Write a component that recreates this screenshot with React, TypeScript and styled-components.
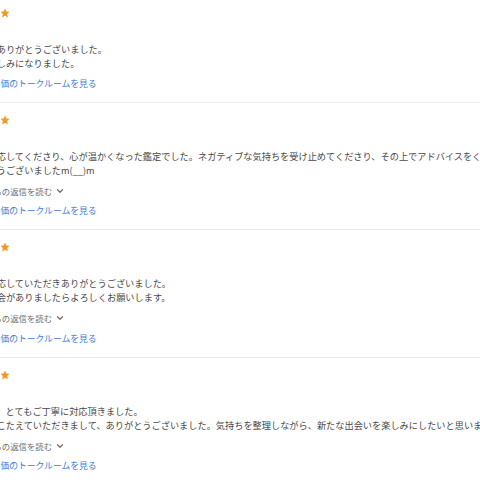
import React from "react";
import styled, { createGlobalStyle } from "styled-components";
import { ChevronDown, MessageSquare } from "lucide-react";

const Global = createGlobalStyle`
  html, body { margin: 0; padding: 0; background: #fff; }
  body { font-family: "Noto Sans CJK JP", "Noto Sans", sans-serif; }
`;

const Viewport = styled.div`
  width: 480px;
  height: 480px;
  overflow: hidden;
  background: #fff;
`;

const List = styled.ul`
  list-style: none;
  margin: -5px 0 0 -40px;
  padding: 0;
  width: 640px;
`;

const Item = styled.li<{ $first?: boolean }>`
  display: flex;
  flex-direction: column;
  border-top: ${(p) => (p.$first ? "none" : "1px solid #ececec")};
  padding: ${(p) => (p.$first ? "11px" : "10px")} 0 11px;
`;

const Stars = styled.div`
  display: flex;
  align-items: center;
  gap: 0;
  height: 14px;
`;

const Body = styled.div`
  margin-top: 22px;
  font-size: 9.2px;
  line-height: 14px;
  color: #484848;
  white-space: nowrap;
`;

const Reply = styled.button`
  all: unset;
  display: flex;
  align-items: center;
  gap: 3px;
  margin-top: 7px;
  height: 14px;
  font-size: 8.4px;
  line-height: 14px;
  color: #6e6e6e;
  white-space: nowrap;
  cursor: pointer;
`;

const Link = styled.a`
  display: flex;
  align-items: center;
  gap: 4px;
  margin-top: 6.5px;
  height: 14px;
  font-size: 8.8px;
  line-height: 14px;
  color: #3b7dd6;
  text-decoration: none;
  white-space: nowrap;
`;

const StarIcon = () => (
  <svg width="10" height="10" viewBox="0 0 24 24">
    <polygon
      points="12,1 15.3,8.3 23,9.1 17.2,14.4 18.9,22.5 12,18.4 5.1,22.5 6.8,14.4 1,9.1 8.7,8.3"
      fill="#f29a26"
    />
  </svg>
);

type Review = { lines: string[]; reply: boolean };

const reviews: Review[] = [
  { lines: ["先日は、ありがとうございました。", "次回も楽しみになりました。"], reply: false },
  {
    lines: [
      "丁寧に対応してくださり、心が温かくなった鑑定でした。ネガティブな気持ちを受け止めてくださり、その上でアドバイスをくださいました。",
      "ありがとうございましたm(__)m",
    ],
    reply: true,
  },
  {
    lines: ["丁寧に対応していただきありがとうございました。", "またの機会がありましたらよろしくお願いします。"],
    reply: true,
  },
  {
    lines: [
      "迅速かつ、とてもご丁寧に対応頂きました。",
      "ご相談にこたえていただきまして、ありがとうございました。気持ちを整理しながら、新たな出会いを楽しみにしたいと思います。",
    ],
    reply: true,
  },
];

export default function App() {
  return (
    <>
      <Global />
      <Viewport>
        <List>
          {reviews.map((r, i) => (
            <Item key={i} $first={i === 0}>
              <Stars>
                {[0, 1, 2, 3, 4].map((s) => (
                  <StarIcon key={s} />
                ))}
              </Stars>
              <Body>
                {r.lines.map((l, j) => (
                  <div key={j}>{l}</div>
                ))}
              </Body>
              {r.reply && (
                <Reply>
                  出品者からの返信を読む
                  <ChevronDown size={10} strokeWidth={3} />
                </Reply>
              )}
              <Link href="#">
                <MessageSquare size={10} />
                この評価のトークルームを見る
              </Link>
            </Item>
          ))}
        </List>
      </Viewport>
    </>
  );
}
